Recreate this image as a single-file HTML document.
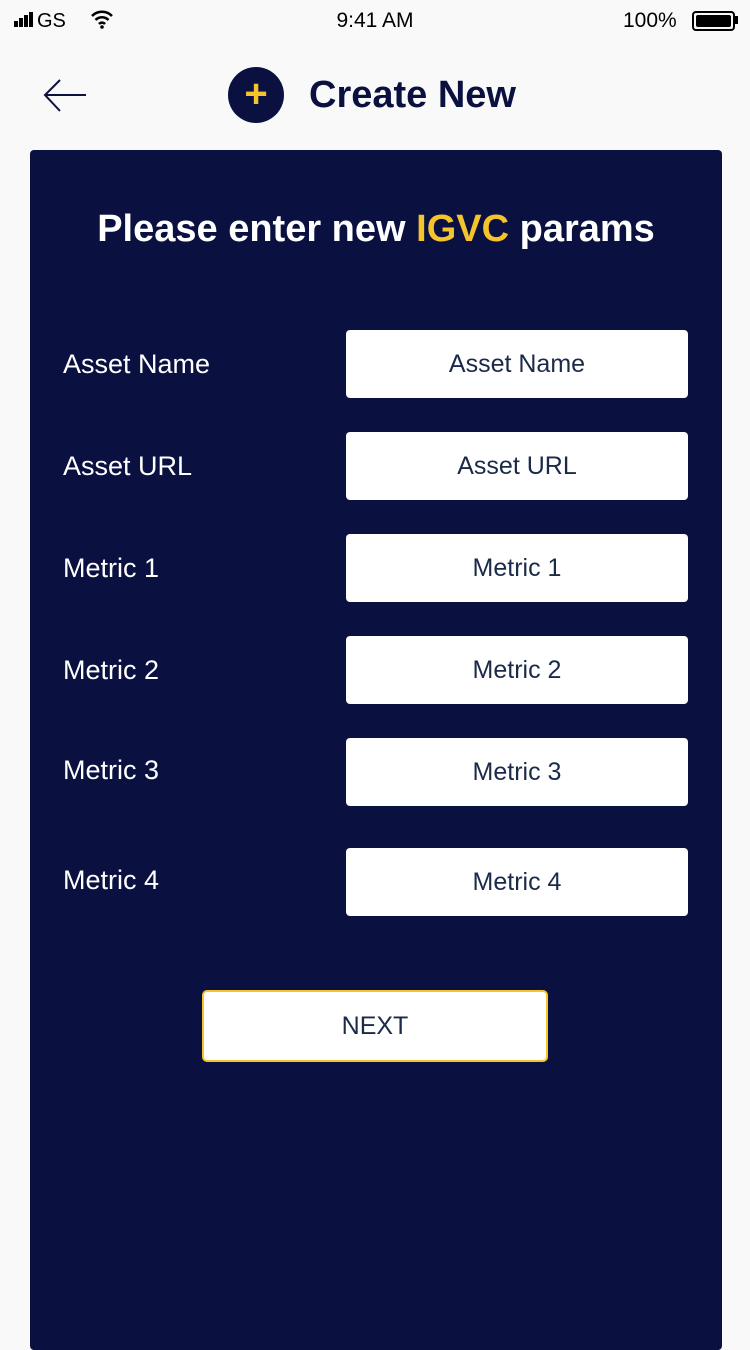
<!DOCTYPE html>
<html><head><meta charset="utf-8"><style>
body{margin:0;width:750px;height:1334px;background:#f9f9f9;font-family:"Liberation Sans",sans-serif;position:relative;overflow:hidden}
.a{position:absolute}
.card{left:30px;top:150px;width:692px;height:1200px;background:#0a1140;border-radius:4px}
.lbl{color:#fff;font-size:27px;left:63px}
.inp{left:346px;width:342px;height:68px;background:#fff;border-radius:4px;color:#1a2a48;font-size:25px;text-align:center;line-height:68px}
</style></head><body>
<div class="a" style="left:14px;top:10px;font-size:20px;color:#000">
<span style="display:inline-block;width:4px;height:6px;background:#000;margin-right:1px"></span><span style="display:inline-block;width:4px;height:9px;background:#000;margin-right:1px"></span><span style="display:inline-block;width:4px;height:12px;background:#000;margin-right:1px"></span><span style="display:inline-block;width:4px;height:15px;background:#000;margin-right:4px"></span>GS</div>
<svg class="a" style="left:90px;top:9px" width="24" height="20"><path d="M2 7a14 14 0 0 1 20 0M5.5 11a9 9 0 0 1 13 0M9 15a4 4 0 0 1 6 0" stroke="#000" stroke-width="2.5" fill="none"/><circle cx="12" cy="18" r="1.8"/></svg>
<div class="a" style="left:0;width:750px;top:9px;text-align:center;font-size:21px;color:#000">9:41 AM</div>
<div class="a" style="left:623px;top:9px;font-size:21px;color:#000">100%</div>
<div class="a" style="left:692px;top:11px;width:39px;height:16px;border:2px solid #000;border-radius:4px"><div style="margin:2px;height:12px;background:#000;border-radius:2px"></div></div>
<div class="a" style="left:735px;top:16px;width:3px;height:8px;background:#000"></div>
<svg class="a" style="left:42px;top:78px" width="46" height="36"><path d="M44 17H3M18 2L3 17L18 33" stroke="#0a1140" stroke-width="2" fill="none"/></svg>
<div class="a" style="left:228px;top:67px;width:56px;height:56px;border-radius:50%;background:#0a1140;color:#f5c42c;font-size:40px;font-weight:bold;text-align:center;line-height:54px">+</div>
<div class="a" style="left:309px;top:74px;font-size:38px;font-weight:bold;color:#0a1140">Create New</div>
<div class="a card"></div>
<div class="a" style="left:30px;width:692px;top:208px;text-align:center;color:#fff;font-size:38px;font-weight:bold">Please enter new <span style="color:#f5c42c">IGVC</span> params</div>
<div class="a lbl" style="top:349px">Asset Name</div><div class="a inp" style="top:330px">Asset Name</div>
<div class="a lbl" style="top:451px">Asset URL</div><div class="a inp" style="top:432px">Asset URL</div>
<div class="a lbl" style="top:553px">Metric 1</div><div class="a inp" style="top:534px">Metric 1</div>
<div class="a lbl" style="top:655px">Metric 2</div><div class="a inp" style="top:636px">Metric 2</div>
<div class="a lbl" style="top:755px">Metric 3</div><div class="a inp" style="top:738px">Metric 3</div>
<div class="a lbl" style="top:865px">Metric 4</div><div class="a inp" style="top:848px">Metric 4</div>
<div class="a" style="left:202px;top:990px;width:342px;height:68px;border:2px solid #f5c42c;border-radius:5px;background:#fff;color:#1a2a48;font-size:25px;text-align:center;line-height:68px">NEXT</div>
</body></html>
